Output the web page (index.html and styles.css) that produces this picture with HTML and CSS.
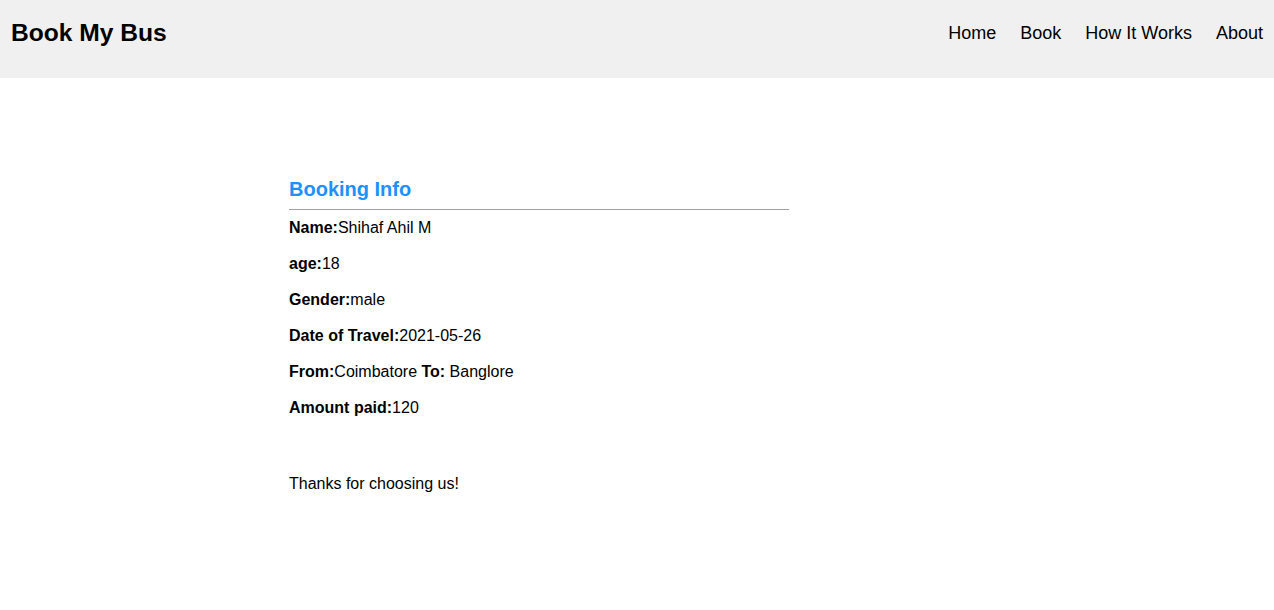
FILE: index.html
```html
<!DOCTYPE html>
<html>
<head>
<meta charset="utf-8">
<title>Book My Bus</title>
<link rel="stylesheet" href="styles.css">
</head>
<body>
<header class="topbar">
  <div class="brand">Book My Bus</div>
  <nav class="nav">
    <a href="#">Home</a>
    <a href="#">Book</a>
    <a href="#">How It Works</a>
    <a href="#">About</a>
  </nav>
</header>
<main class="content">
  <section class="card">
    <h2 class="card-title">Booking Info</h2>
    <hr class="rule">
    <p class="row"><b>Name:</b>Shihaf Ahil M</p>
    <p class="row"><b>age:</b>18</p>
    <p class="row"><b>Gender:</b>male</p>
    <p class="row"><b>Date of Travel:</b>2021-05-26</p>
    <p class="row"><b>From:</b>Coimbatore <b>To:</b> Banglore</p>
    <p class="row"><b>Amount paid:</b>120</p>
    <p class="row thanks">Thanks for choosing us!</p>
  </section>
</main>
</body>
</html>
```
FILE: styles.css
```css
html, body {
  margin: 0;
  padding: 0;
  background: #ffffff;
  font-family: "Liberation Sans", Arial, sans-serif;
  color: #000;
}
.topbar {
  height: 78px;
  background: #f0f0f0;
  display: flex;
  align-items: center;
  justify-content: space-between;
  padding: 0 11px 0 11px;
  box-sizing: border-box;
}
.brand {
  font-size: 24.6px;
  font-weight: bold;
  margin-bottom: 12px;
}
.nav {
  display: flex;
  gap: 24px;
  margin-bottom: 12px;
}
.nav a {
  font-size: 18px;
  color: #000;
  text-decoration: none;
}
.content {
  padding: 0 0 0 289px;
}
.card {
  width: 500px;
  padding-top: 98px;
}
.card-title {
  margin: 0;
  font-size: 20px;
  line-height: 26px;
  color: #1e90ff;
  font-weight: bold;
}
.rule {
  margin: 7px 0 8px;
  border: 0;
  border-top: 1px solid #a0a0a0;
  height: 0;
}
.row {
  margin: 0 0 16px;
  font-size: 16px;
  line-height: 20px;
}
.thanks {
  margin-top: 56px;
}
```
